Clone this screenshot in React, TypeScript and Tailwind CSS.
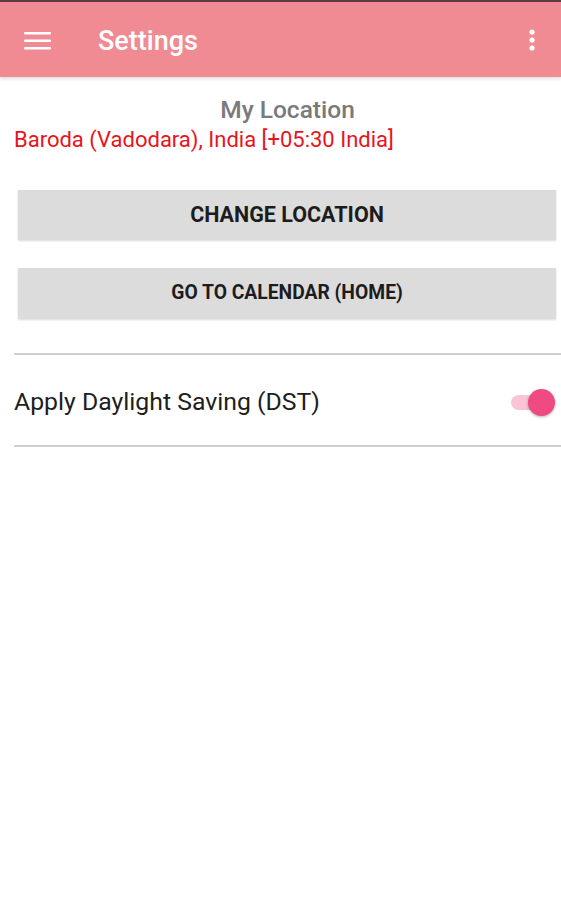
import React from 'react';

const App = () => {
  return (
    <div className="w-[561px] h-[900px] bg-white font-['Roboto',sans-serif] overflow-hidden">
      <div className="h-[2px] bg-[#5b3b3f]" />
      <header className="relative h-[75px] bg-[#f08a93] flex items-center shadow-[0_2px_3px_rgba(0,0,0,0.12)]">
        <svg className="ml-[24px]" width="28" height="20" viewBox="0 0 28 20">
          <rect x="0" y="2" width="27" height="2.6" rx="1" fill="#fff" />
          <rect x="0" y="9.5" width="27" height="2.6" rx="1" fill="#fff" />
          <rect x="0" y="17" width="27" height="2.6" rx="1" fill="#fff" />
        </svg>
        <h1 className="ml-[46px] mt-[3px] text-[27px] font-medium text-white leading-[32px]">Settings</h1>
        <svg className="ml-auto mr-[26px]" width="6" height="24" viewBox="0 0 6 24">
          <circle cx="3" cy="4" r="2.6" fill="#fff" />
          <circle cx="3" cy="12" r="2.6" fill="#fff" />
          <circle cx="3" cy="20" r="2.6" fill="#fff" />
        </svg>
      </header>

      <div className="pt-[18px] pl-[14px]">
        <p className="text-center text-[24.5px] font-medium text-[#7a7a7a] leading-[30px]">My Location</p>
        <p className="text-[22px] text-[#e8141c] leading-[28px] mt-[1px]">Baroda (Vadodara), India [+05:30 India]</p>
      </div>

      <div className="flex flex-col gap-[28px] pl-[18px] pr-[5px] mt-[36px]">
        <button className="h-[50px] bg-[#dcdcdc] text-[21.5px] font-bold text-[#1c1c1c] shadow-[0_1px_2px_rgba(0,0,0,0.15)]">
          CHANGE LOCATION
        </button>
        <button className="h-[51px] bg-[#dcdcdc] text-[19.3px] font-bold text-[#1c1c1c] shadow-[0_1px_2px_rgba(0,0,0,0.15)]">
          GO TO CALENDAR (HOME)
        </button>
      </div>

      <div className="ml-[14px] mt-[34px] h-[2px] bg-[#cfcfcf]" />
      <div className="ml-[14px] h-[90px] pt-[4px] flex items-center justify-between">
        <span className="text-[24.8px] text-[#1e1e1e]">Apply Daylight Saving (DST)</span>
        <div className="relative w-[44px] h-[27px] mr-[6px]">
          <div className="absolute left-0 top-[6px] w-[32px] h-[15px] rounded-full bg-[#f9c4d6]" />
          <div className="absolute right-0 top-0 w-[27px] h-[27px] rounded-full bg-[#ef4a82] shadow-[0_1px_3px_rgba(0,0,0,0.3)]" />
        </div>
      </div>
      <div className="ml-[14px] h-[2px] bg-[#cfcfcf]" />
    </div>
  );
};

export default App;
